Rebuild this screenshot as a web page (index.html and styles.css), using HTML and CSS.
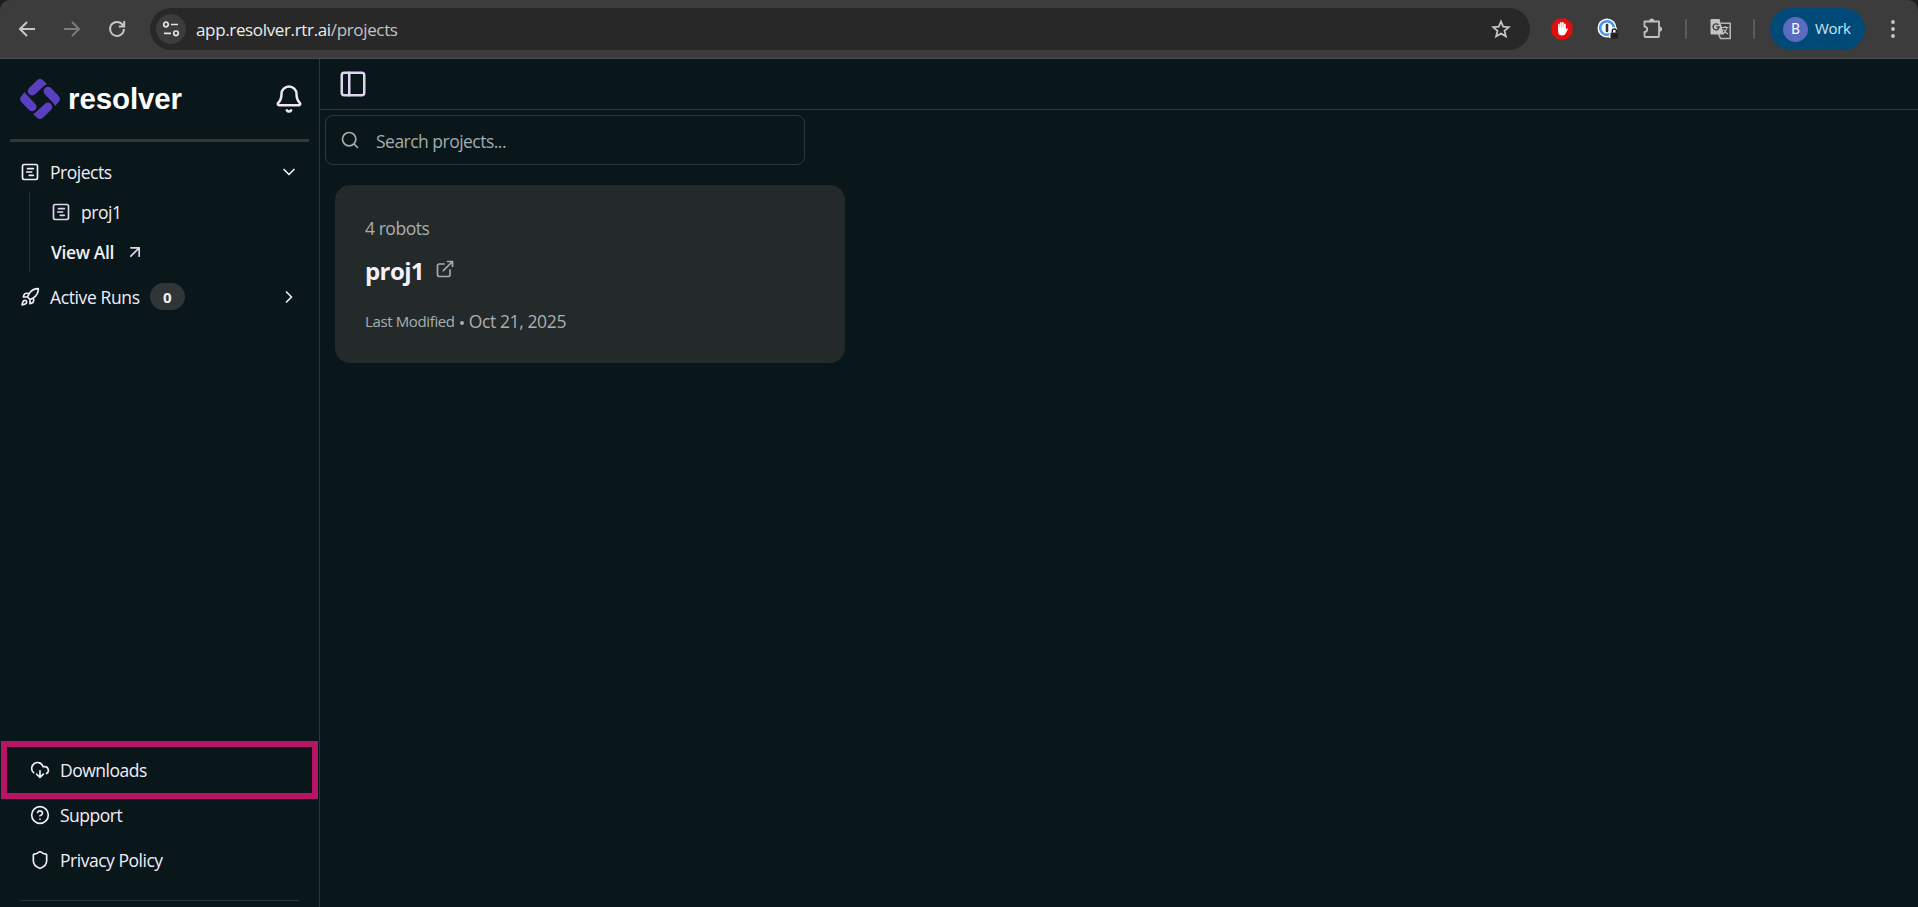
FILE: index.html
```html
<!DOCTYPE html>
<html lang="en">
<head>
<meta charset="utf-8">
<title>Resolver - Projects</title>
<link rel="stylesheet" href="styles.css">
</head>
<body>
<svg class="defs" width="0" height="0">
  <symbol id="gantt" viewBox="0 0 24 24"><rect x="3" y="3" width="18" height="18" rx="2"/><path d="M9 8h7M8 12h6M11 16h5"/></symbol>
  <symbol id="blade" viewBox="0 0 40 40"><path d="M7.700 12.200Q7.700 10.300 9 9L17 1.300Q20-1.200 23 1.300L27 4.900Q25.500 5.500 24 7L14.800 15.600Q11.500 17.600 8.900 15.100 7.700 13.800 7.700 12.200z"/></symbol>
</svg>
<div class="browser">
  <header class="toolbar">
    <div class="nav">
      <svg class="ci" viewBox="0 0 24 24"><path d="M20 12H5M12 5l-7 7 7 7"/></svg>
      <svg class="ci dim" viewBox="0 0 24 24"><path d="M4 12h15M12 5l7 7-7 7"/></svg>
      <svg class="ci" viewBox="0 0 24 24"><path d="M19 12a7 7 0 1 1-2-5l2 2.400M19.200 4v5.400h-5.400"/></svg>
    </div>
    <div class="omnibox">
      <span class="site-info"><svg viewBox="0 0 18 18"><circle cx="4" cy="4.500" r="2.300"/><path d="M9 4.500h7M2 13.300h7"/><circle cx="14" cy="13.300" r="2.300"/></svg></span>
      <span class="url">app.resolver.rtr.ai<span class="path">/projects</span></span>
      <svg class="star" viewBox="0 0 24 24"><path d="M12 3.800l2.400 5.700 6.100.500-4.700 4 1.500 6-5.300-3.200-5.300 3.200 1.500-6-4.700-4 6.100-.500z"/></svg>
    </div>
    <div class="extensions">
      <svg class="ext-block" viewBox="0 0 22 22"><path class="octagon" d="M6.600.500h8.800l6.100 6.100v8.800l-6.100 6.100H6.600L.5 15.400V6.600z"/><path class="hand" d="M7.900 11V6.400M9.900 10V4.800M11.900 10V4.800M13.900 11V6.400"/><path class="palm" d="M7.100 9.500h7.600v2.300l1.200-1.400c.7-.500 1.300.200 1 .900l-2.300 4.300c-.8 1.400-1.900 1.900-3.500 1.900-2.600 0-4-1.600-4-4z"/></svg>
      <svg class="ext-pass" viewBox="0 0 22 22"><circle cx="10" cy="10" r="9.500" fill="#fff"/><circle cx="10" cy="10" r="6.800" fill="none" stroke="#4495f0" stroke-width="2.600"/><rect x="8.700" y="5.700" width="2.600" height="8.600" rx="1" fill="#26384c"/><path d="M12.500 13l3.500-4 4 1v4l-6 6h-2z" fill="#fff"/><rect x="13.500" y="14.500" width="7.500" height="6" rx="1" fill="#222"/><path d="M15.300 14.500V13a2 2 0 0 1 4 0v1.500" fill="none" stroke="#222" stroke-width="1.500"/></svg>
      <svg class="ext-puzzle" viewBox="0 0 22 22"><path d="M2.500 3.500H8.200h3H17v14.500q0 1-1 1H3.500q-1 0-1-1V14a2.700 2.700 0 0 0 0-5.400V3.500z"/><path class="knob" d="M7.200 3a2.500 2.500 0 0 1 5 0zM17.500 8.500a2.600 2.600 0 0 1 0 5.200z"/></svg>
      <i class="sep"></i>
      <svg class="ext-translate" viewBox="0 0 22 22"><path d="M11 5.200h9.200v15.300H10.500L8.500 16" fill="none" stroke="#b4b4b4" stroke-width="1.600"/><path d="M1.500 1h8l4.500 15.500h-12.500a1 1 0 0 1-1-1V2a1 1 0 0 1 1-1z" fill="#c2c2c2"/><path d="M8.300 6.800a3 3 0 1 0 .8 2.200H6.300" fill="none" stroke="#3c3c3c" stroke-width="1.400"/><path d="M12 9.500h6.500M15.200 8v1.500M17 9.500c-.5 3-2 5-4 6.500M13.500 11.500c1 2 2.500 3.500 4.500 4.500" fill="none" stroke="#c2c2c2" stroke-width="1.200"/></svg>
      <i class="sep"></i>
      <div class="profile"><span class="avatar">B</span><span class="profile-name">Work</span></div>
      <svg class="kebab" viewBox="0 0 6 20"><circle cx="3" cy="3" r="1.900"/><circle cx="3" cy="10" r="1.900"/><circle cx="3" cy="17" r="1.900"/></svg>
    </div>
  </header>

  <div class="app">
    <aside class="sidebar">
      <div class="brand">
        <svg class="logo" viewBox="0 0 40 40"><use href="#blade" width="40" height="40"/><use href="#blade" width="40" height="40" transform="rotate(90 20 20)"/><use href="#blade" width="40" height="40" transform="rotate(180 20 20)"/><use href="#blade" width="40" height="40" transform="rotate(270 20 20)"/></svg>
        <span class="wordmark">resolver</span>
        <svg class="icon bell" viewBox="0 0 24 24"><path d="M10.268 21a2 2 0 0 0 3.464 0M3.262 15.326A1 1 0 0 0 4 17h16a1 1 0 0 0 .74-1.673C19.410 13.956 18 12.499 18 8A6 6 0 0 0 6 8c0 4.499-1.411 5.956-2.738 7.326"/></svg>
      </div>
      <nav class="menu">
        <a class="item"><svg class="icon"><use href="#gantt"/></svg><span>Projects</span><svg class="icon chev" viewBox="0 0 24 24"><path d="m6 9 6 6 6-6"/></svg></a>
        <div class="tree">
          <a class="item"><svg class="icon tint"><use href="#gantt"/></svg><span>proj1</span></a>
          <a class="item view-all"><span>View All</span><svg class="icon tint" viewBox="0 0 24 24"><path d="M7 7h10v10M7 17 17 7"/></svg></a>
        </div>
        <a class="item runs"><svg class="icon" viewBox="0 0 24 24"><path d="M4.500 16.500c-1.500 1.260-2 5-2 5s3.740-.5 5-2c.71-.84.7-2.130-.09-2.910a2.180 2.180 0 0 0-2.910-.09zM12 15l-3-3a22 22 0 0 1 2-3.950A12.880 12.880 0 0 1 22 2c0 2.720-.78 7.500-6 11a22.350 22.350 0 0 1-4 2zM9 12H4s.55-3.030 2-4c1.620-1.080 5 0 5 0M12 15v5s3.030-.55 4-2c1.080-1.620 0-5 0-5"/></svg><span>Active Runs</span><span class="badge">0</span><svg class="icon chev" viewBox="0 0 24 24"><path d="m9 18 6-6-6-6"/></svg></a>
      </nav>
      <div class="links">
        <a class="item highlight"><svg class="icon" viewBox="0 0 24 24"><path d="M12 13v8l-4-4M12 21l4-4M4.393 15.269A7 7 0 1 1 15.710 8h1.790a4.500 4.500 0 0 1 2.436 8.284"/></svg><span>Downloads</span></a>
        <a class="item"><svg class="icon" viewBox="0 0 24 24"><circle cx="12" cy="12" r="10"/><path d="M9.090 9a3 3 0 0 1 5.830 1c0 2-3 3-3 3M12 17h.01"/></svg><span>Support</span></a>
        <a class="item"><svg class="icon" viewBox="0 0 24 24"><path d="M20 13c0 5-3.500 7.500-7.660 8.950a1 1 0 0 1-.67-.01C7.500 20.500 4 18 4 13V6a1 1 0 0 1 1-1c2 0 4.500-1.200 6.240-2.720a1.170 1.170 0 0 1 1.520 0C14.510 3.810 17 5 19 5a1 1 0 0 1 1 1z"/></svg><span>Privacy Policy</span></a>
      </div>
    </aside>
    <main class="main">
      <div class="topbar"><svg class="icon tint panel" viewBox="0 0 24 24"><rect x="3" y="3" width="18" height="18" rx="2"/><path d="M9 3v18"/></svg></div>
      <div class="search"><svg class="icon" viewBox="0 0 24 24"><circle cx="11" cy="11" r="8"/><path d="m21 21-4.300-4.300"/></svg><span>Search projects...</span></div>
      <article class="card">
        <div class="robots">4 robots</div>
        <div class="title"><span>proj1</span><svg class="icon" viewBox="0 0 24 24"><path d="M15 3h6v6M10 14 21 3M18 13v6a2 2 0 0 1-2 2H5a2 2 0 0 1-2-2V8a2 2 0 0 1 2-2h6"/></svg></div>
        <div class="modified"><span class="label">Last Modified</span><i class="dot"></i><span class="date">Oct 21, 2025</span></div>
      </article>
    </main>
  </div>
</div>
</body>
</html>
```

FILE: styles.css
```css
* { box-sizing: border-box; }
body { margin: 0; background: #1f1f1f; font-family: "Open Sans", "Noto Sans", sans-serif; font-size: 17.5px; color: #f1eef8; }
.defs { display: block; height: 0; }
.browser { width: 1918px; height: 907px; display: flex; flex-direction: column; overflow: hidden; }
svg { flex: none; display: block; }

/* Browser toolbar */
.toolbar { height: 59px; flex: none; display: flex; align-items: center; background: #3c3c3c; border-bottom: 1px solid #4c4e4e; border-radius: 10px 10px 0 0; }
.nav { width: 150px; display: flex; gap: 21px; padding-left: 15px; }
.ci { width: 24px; height: 24px; fill: none; stroke: #c7c7c7; stroke-width: 2; }
.ci.dim { stroke: #7b7b7b; }
.omnibox { width: 1380px; height: 42px; border-radius: 21px; background: #282828; display: flex; align-items: center; padding: 0 18px 0 6px; }
.site-info { width: 30px; height: 30px; border-radius: 50%; background: #3c3c3c; display: flex; align-items: center; justify-content: center; }
.site-info svg { width: 18px; height: 18px; fill: none; stroke: #e3e3e3; stroke-width: 1.7; }
.url { flex: 1; padding-left: 10px; font-size: 17px; letter-spacing: -0.35px; color: #ececec; }
.url .path { color: #c4c4c4; }
.star { width: 22px; height: 22px; fill: none; stroke: #c7c7c7; stroke-width: 1.9; }
.extensions { display: flex; align-items: center; }
.ext-block { width: 22px; height: 22px; margin-left: 21px; }
.octagon { fill: #e40d0d; }
.hand { fill: none; stroke: #fff; stroke-width: 1.7; stroke-linecap: round; }
.palm { fill: #fff; }
.ext-pass { width: 22px; height: 22px; margin-left: 24px; }
.ext-puzzle { width: 22px; height: 22px; margin-left: 23px; fill: none; stroke: #c0c0c0; stroke-width: 1.8; stroke-linejoin: round; }
.knob { fill: #c0c0c0; stroke: none; }
.sep { width: 2px; height: 20px; margin-left: 21px; background: #5c5c5c; border-radius: 1px; }
.ext-translate { width: 22px; height: 22px; margin-left: 23px; }
.profile { width: 95px; height: 42px; margin-left: 15px; border-radius: 21px; background: #004a77; display: flex; align-items: center; padding-left: 13px; gap: 7px; color: #c9e5fb; }
.avatar { width: 25px; height: 25px; border-radius: 50%; background: #5c6bc0; color: #fff; font: 14px/25px Roboto, sans-serif; text-align: center; }
.profile-name { font-size: 15px; letter-spacing: -0.3px; padding-bottom: 2px; }
.kebab { width: 6px; height: 20px; margin-left: 25px; fill: #c7c7c7; }

/* App shell */
.app { flex: 1; display: flex; background: #09161a; min-height: 0; }
.icon { width: 20px; height: 20px; fill: none; stroke: #f1eef8; stroke-width: 2; stroke-linecap: round; stroke-linejoin: round; }
.tint { stroke: #ded6f0; }
.sidebar { width: 320px; border-right: 1px solid #2d3739; display: flex; flex-direction: column; }
.brand { height: 83px; margin: 0 10px; border-bottom: 3px solid #303739; display: flex; align-items: center; padding: 0 5px 0 10px; }
.logo { width: 40px; height: 40px; fill: #5a3fc0; }
.wordmark { flex: 1; padding-left: 8px; font: bold 29.5px "Liberation Sans", sans-serif; letter-spacing: -0.1px; color: #fff; }
.bell { width: 30px; height: 30px; stroke: #ece6f8; }
.menu { flex: 1; padding: 10px 20px; }
.item { display: flex; align-items: center; height: 40px; gap: 10px; letter-spacing: -0.48px; white-space: nowrap; }
.chev { margin-left: auto; }
.tree { margin-left: 9px; padding-left: 21px; border-left: 1px solid #263032; }
.view-all { font-weight: 600; gap: 11px; letter-spacing: -0.38px; }
.runs { height: 49px; letter-spacing: -0.38px; }
.badge { width: 35px; height: 27px; border-radius: 14px; background: #303637; font-size: 15px; font-weight: 700; display: flex; align-items: center; justify-content: center; }
.links { margin-bottom: 6px; }
.links::after { content: ""; display: block; height: 1px; margin: 18px 20px 0; background: #2d3739; }
.links .item { height: 45px; padding-left: 30px; }
.links .highlight { height: 58px; margin: 0 1px -7px; padding-left: 23px; border: 6px solid #b51563; }

.main { flex: 1; }
.topbar { height: 51px; border-bottom: 1px solid #2d3739; padding: 10px 0 0 18px; }
.panel { width: 30px; height: 30px; }
.search { width: 480px; height: 50px; margin: 5px 0 0 5px; border: 1px solid #2d3739; border-radius: 8px; display: flex; align-items: center; padding-left: 14px; gap: 16px; color: #a4acac; letter-spacing: -0.52px; }
.search span { padding-top: 2px; }
.search .icon, .card .icon { stroke: #a4acac; }
.card { width: 510px; height: 178px; margin: 20px 0 0 15px; padding: 30px; border-radius: 15px; background: #242929; color: #a9afb0; }
.robots { line-height: 27px; letter-spacing: -0.45px; }
.title { display: flex; align-items: center; gap: 11px; margin-top: 11px; height: 34px; font-size: 24px; font-weight: 700; color: #f3f0fa; letter-spacing: -0.6px; }
.title .icon { margin-bottom: 2px; }
.modified { display: flex; align-items: center; margin-top: 21px; line-height: 27px; }
.label { font-size: 15px; letter-spacing: -0.37px; }
.dot { width: 4px; height: 4px; margin: 2px 5px 0; border-radius: 50%; background: #a9afb0; }
.date { letter-spacing: -0.38px; }
```
